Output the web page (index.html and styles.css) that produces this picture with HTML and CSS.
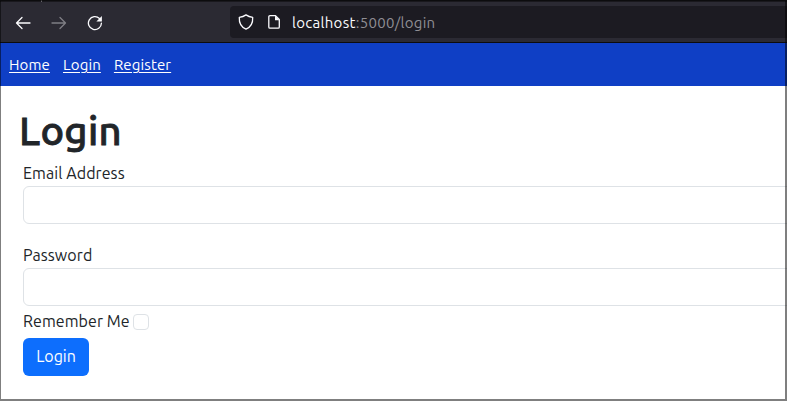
FILE: index.html
```html
<!DOCTYPE html>
<html lang="en">
<head>
<meta charset="utf-8">
<title>Login</title>
<link rel="stylesheet" href="styles.css">
</head>
<body>
<div class="window">
  <header class="toolbar">
    <div class="controls">
      <svg class="icon" viewBox="0 0 16 16"><path d="M15 8H1.5M7 2.5L1.5 8L7 13.5"/></svg>
      <svg class="icon icon-disabled" viewBox="0 0 16 16"><path d="M1 8H14.500M9 2.500L14.500 8L9 13.500"/></svg>
      <svg class="icon" viewBox="0 0 16 16"><path d="M14.400 8.200A6.500 6.500 0 1 1 12.500 3.500"/><path class="solid" d="M14.900 1v5.500H9.400z"/></svg>
    </div>
    <div class="address">
      <svg class="icon" viewBox="0 0 16 16"><path d="M8 .9C10 2.300 12 3 14.700 3.300C15 8.500 12.500 13.300 8 15.200C3.500 13.300 1 8.500 1.300 3.300C4 3 6 2.300 8 .9z"/></svg>
      <svg class="icon page" viewBox="0 0 16 16"><path d="M4 1.700h5.500L13.300 5.500V13a1.200 1.200 0 0 1-1.200 1.200H4A1.200 1.200 0 0 1 2.800 13V2.900A1.200 1.200 0 0 1 4 1.700z"/><path class="solid" d="M9 1.500v4.700h4.500z"/></svg>
      <span class="url"><span class="host">localhost</span>:5000/login</span>
    </div>
  </header>
  <nav class="nav"><a href="#">Home</a><a href="#">Login</a><a href="#">Register</a></nav>
  <main class="content">
    <h1>Login</h1>
    <form>
      <label for="email">Email Address</label>
      <input class="field" id="email" type="text">
      <label for="password">Password</label>
      <input class="field" id="password" type="password">
      <div class="remember"><label for="remember">Remember Me</label><input class="check" id="remember" type="checkbox"></div>
      <button class="submit" type="button">Login</button>
    </form>
  </main>
</div>
</body>
</html>
```
FILE: styles.css
```css
* { box-sizing: border-box; }
body {
  margin: 0;
  font: 16px/24px "Ubuntu", "Noto Sans", sans-serif;
  color: #212529;
  background: #fff;
}
.window {
  position: relative;
  height: 401px;
  overflow: hidden;
}
.window::after {
  content: "";
  position: absolute;
  inset: 0;
  border: solid rgba(0, 0, 0, .5);
  border-width: 1px 2px 2px 1px;
  pointer-events: none;
}
.toolbar {
  position: relative;
  display: flex;
  height: 43px;
  padding: 4px 0 3px 15px;
  background: #2b2a33;
  border-top: 2px solid #19181d;
  border-bottom: 1px solid #0c0c0d;
}
/* edge of the tab strip above the toolbar */
.toolbar::before {
  content: "";
  position: absolute;
  top: -2px;
  left: 41px;
  width: 1px;
  height: 2px;
  background: #66656b;
}
.controls {
  display: flex;
  align-items: center;
  gap: 20px;
  width: 215px;
}
.address {
  flex: 1;
  display: flex;
  align-items: center;
  height: 32px;
  padding-left: 8px;
  background: #1c1b22;
  border-radius: 4px 0 0 4px;
}
.icon {
  width: 16px;
  height: 16px;
  fill: none;
  stroke: #fbfbfe;
  stroke-width: 1.3;
  stroke-linecap: round;
  stroke-linejoin: round;
}
.icon .solid { fill: #fbfbfe; stroke: none; }
.icon-disabled { opacity: .4; }
.page { margin-left: 12px; }
.url {
  margin-left: 10px;
  padding-top: 1px;
  font-size: 15px;
  letter-spacing: .29px;
  color: #8f8e94;
}
.host { color: #fbfbfe; }
.nav {
  display: flex;
  align-items: center;
  gap: 13px;
  height: 43px;
  padding-left: 9px;
  background: #0f3fc5;
  font-size: 15px;
  letter-spacing: .13px;
}
.nav a {
  color: #fff;
  text-underline-offset: 2px;
  text-decoration-thickness: 1px;
}
.content { padding: 21px 0 0 19px; }
h1 {
  margin: 0 0 6px;
  font-size: 40px;
  line-height: 48px;
  font-weight: 500;
  letter-spacing: .3px;
  -webkit-text-stroke: .8px #212529;
}
form { padding-left: 4px; }
label { letter-spacing: .08px; }
form > label { display: block; }
.field {
  display: block;
  width: 800px;
  height: 38px;
  margin: 1px 0 19px;
  border: 1px solid #dee2e6;
  border-radius: 6px;
  background: #fff;
}
.field + .remember { margin-top: -16px; }
.remember { display: flex; align-items: center; height: 24px; }
.check {
  appearance: none;
  width: 16px;
  height: 16px;
  margin: 1px 0 0 3px;
  border: 1px solid #dee2e6;
  border-radius: 4px;
  background: #fff;
}
.submit {
  display: block;
  width: 66px;
  height: 38px;
  margin-top: 5px;
  padding: 0 0 2px;
  border: 0;
  border-radius: 6px;
  background: #0d6efd;
  color: #fff;
  font: inherit;
}
```
